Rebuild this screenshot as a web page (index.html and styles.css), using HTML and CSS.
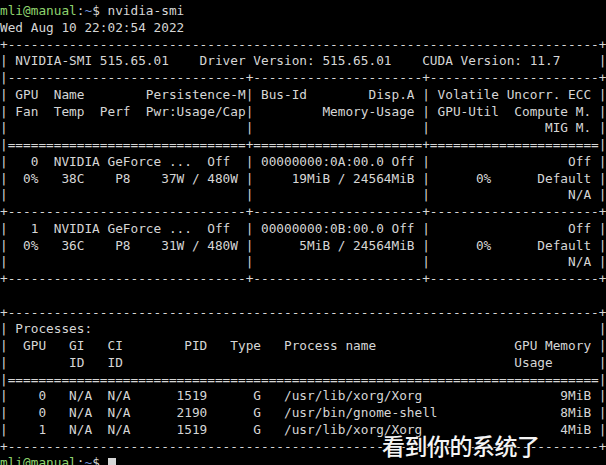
FILE: index.html
```html
<!DOCTYPE html>
<html lang="zh">
<head>
  <meta charset="UTF-8" />
  <title>nvidia-smi</title>
  <link rel="stylesheet" href="styles.css">
</head>
<body>

<div class="terminal">
<pre class="screen"><span class="user">mli@manual</span>:<span class="path">~</span>$ nvidia-smi
Wed Aug 10 22:02:54 2022
+-----------------------------------------------------------------------------+
| NVIDIA-SMI 515.65.01    Driver Version: 515.65.01    CUDA Version: 11.7     |
|-------------------------------+----------------------+----------------------+
| GPU  Name        Persistence-M| Bus-Id        Disp.A | Volatile Uncorr. ECC |
| Fan  Temp  Perf  Pwr:Usage/Cap|         Memory-Usage | GPU-Util  Compute M. |
|                               |                      |               MIG M. |
|===============================+======================+======================|
|   0  NVIDIA GeForce ...  Off  | 00000000:0A:00.0 Off |                  Off |
|  0%   38C    P8    37W / 480W |     19MiB / 24564MiB |      0%      Default |
|                               |                      |                  N/A |
+-------------------------------+----------------------+----------------------+
|   1  NVIDIA GeForce ...  Off  | 00000000:0B:00.0 Off |                  Off |
|  0%   36C    P8    31W / 480W |      5MiB / 24564MiB |      0%      Default |
|                               |                      |                  N/A |
+-------------------------------+----------------------+----------------------+

+-----------------------------------------------------------------------------+
| Processes:                                                                  |
|  GPU   GI   CI        PID   Type   Process name                  GPU Memory |
|        ID   ID                                                   Usage      |
|=============================================================================|
|    0   N/A  N/A      1519      G   /usr/lib/xorg/Xorg                  9MiB |
|    0   N/A  N/A      2190      G   /usr/bin/gnome-shell                8MiB |
|    1   N/A  N/A      1519      G   /usr/lib/xorg/Xorg                  4MiB |
+-----------------------------------------------------------------------------+
<span class="user">mli@manual</span>:<span class="path">~</span>$ <span class="cursor"> </span></pre>

  <!-- phụ đề video -->
  <div class="subtitle">看到你的系统了</div>
</div>

</body>
</html>
```

FILE: styles.css
```css
html, body {
    margin: 0;
    background: #000;
}

.terminal {
    position: relative;
    width: 606px;
    height: 465px;
    overflow: hidden;
    background: #000;
}

.screen {
    margin: 0;
    padding: 3px 0 0 0;
    font-family: "DejaVu Sans Mono", "Liberation Mono", monospace;
    font-size: 12.75px;
    line-height: 16.75px;
    color: #d6d6d6;
    white-space: pre;
}

.user {
    color: #8fd46e;
}

.path {
    color: #7393dc;
}

.cursor {
    display: inline-block;
    width: 8px;
    height: 15px;
    vertical-align: -3px;
    background: #d6d6d6;
}

/* Subtitle overlay */
.subtitle {
    position: absolute;
    left: 382px;
    top: 428px;
    font-family: "Noto Sans CJK SC", sans-serif;
    font-size: 23px;
    font-weight: 500;
    color: #f4f4f4;
    letter-spacing: -0.5px;
    text-shadow: 0 0 2px #000, 1px 1px 1px #000;
}
```
